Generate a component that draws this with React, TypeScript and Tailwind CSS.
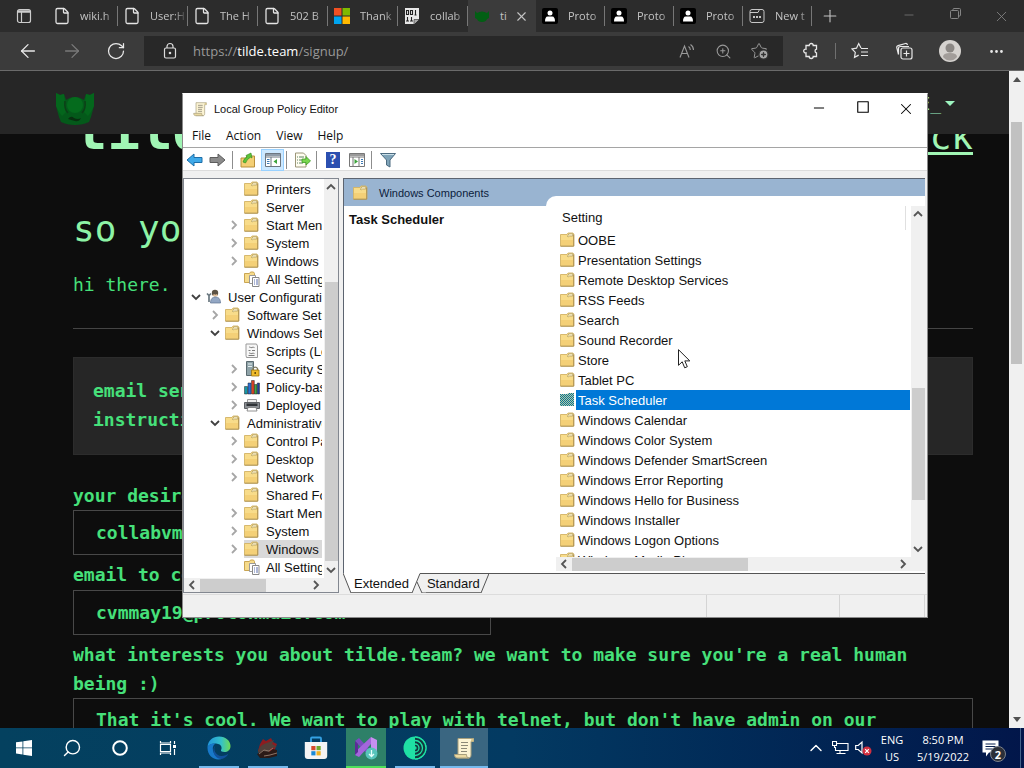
import type { ReactNode } from 'react';
import { ArrowLeft, ArrowRight, ChevronUp, CirclePlus, Ellipsis, File, Minus, Plus, RotateCw, Search, Square, Star, X, ZoomIn } from 'lucide-react';
import clsx from 'clsx';

/* ---------- icons ---------- */

const FolderIcon = () => (
    <svg width="16" height="16" viewBox="0 0 16 16" className="shrink-0">
        <path d="M.5 2.500h6.500l1-1.500h5l.8 1.500V14H.5z" fill="#f8dc8a" stroke="#d3b365" strokeWidth=".9" />
        <path d="M1 8h12.500v5.500H1z" fill="#f4d077" />
        <path d="M7.500 4.500l1.300-2.700h4v2.200H9.500l-.8.7z" fill="#fff3cb" stroke="#a8965c" strokeWidth=".7" />
        <path d="M13.700 2.500v11.700H.5" fill="none" stroke="#ad9150" />
    </svg>
);

const SelectedFolderIcon = () => (
    <svg width="16" height="16" viewBox="0 0 16 16" className="shrink-0">
        <defs>
            <pattern id="dither" width="2" height="2" patternUnits="userSpaceOnUse">
                <path d="M0 0h1v1H0zM1 1h1v1H1z" fill="#0a6f9e" />
            </pattern>
        </defs>
        <path d="M0 2h7.500l1-1H14v13H0z" fill="#b4cfa0" />
        <path d="M0 2h7.500l1-1H14v13H0z" fill="url(#dither)" />
    </svg>
);

const AllSettingsIcon = () => (
    <svg width="16" height="16" viewBox="0 0 16 16" className="shrink-0">
        <path d="M.5 2.500h5l1-1.500h3l1 1.500v9H.5z" fill="#f6db8b" stroke="#c9a552" />
        <path d="M5.500 4.500h6v8h-6z" fill="#fff" stroke="#999" />
        <path d="M8.500 6.500h6.500v9H8.500z" fill="#fff" stroke="#888" />
        <path d="M10 9h1m1 0h2M10 11h1m1 0h2M10 13h1m1 0h2" stroke="#5b6fae" />
    </svg>
);

const UserConfigIcon = () => (
    <svg width="16" height="16" viewBox="0 0 16 16" className="shrink-0">
        <circle cx="9" cy="4" r="3.200" fill="#5c5244" />
        <path d="M7.500 5.500a2 2 0 0 0 3.500 0" stroke="#e6c39d" strokeWidth="2" />
        <path d="M4.500 14c0-4 2-6 5-6s5 2 5 6z" fill="#93a7c4" stroke="#5f738f" strokeWidth=".7" />
        <path d="M1 4.500l2 2 2-2M3 6v7" fill="none" stroke="#6a7880" strokeWidth="1.700" />
    </svg>
);

const ScriptsIcon = () => (
    <svg width="16" height="16" viewBox="0 0 16 16" className="shrink-0">
        <path d="M2 1h10.500l1 2v11.500H2.500l-.5-2z" fill="#f7f7f7" stroke="#999" />
        <path d="M5 4.500c1-1.500 1.500 1 3 0s2 .5 2.500 0M4.500 7.500h2m1.500 0h3M5 10.500c1-1.500 1.500 1 3 0s2 .5 2.500 0M4.500 12.500h6" fill="none" stroke="#7b7b7b" />
    </svg>
);

const SecurityIcon = () => (
    <svg width="16" height="16" viewBox="0 0 16 16" className="shrink-0">
        <path d="M2.500.5h7v14h-7z" fill="#8fa3a8" stroke="#5a6a70" />
        <path d="M4 3h4M4 5.500h4" stroke="#e6f0f2" />
        <path d="M9 9V7.500a2.500 2.500 0 0 1 4.500 0V9" fill="none" stroke="#7d7a62" strokeWidth="1.300" />
        <path d="M7.500 9h7.500v6H7.500z" fill="#f0bc2c" stroke="#9a7412" strokeWidth=".8" />
        <path d="M11.200 11v2" stroke="#5a4308" strokeWidth="1.400" />
    </svg>
);

const PolicyIcon = () => (
    <svg width="16" height="16" viewBox="0 0 16 16" className="shrink-0">
        <path d="M.5 7.500h3V15h-3z" fill="#1697a6" stroke="#222" strokeWidth=".5" />
        <path d="M4 4h3v11H4z" fill="#2c6fd4" stroke="#222" strokeWidth=".5" />
        <path d="M7.500 1.500h2.800V15H7.500z" fill="#d94124" stroke="#222" strokeWidth=".5" />
        <path d="M10.500 5.500H13V15h-2.500z" fill="#41a546" stroke="#222" strokeWidth=".5" />
        <path d="M13.300 4h2.200v11h-2.200z" fill="#1d3f9a" stroke="#222" strokeWidth=".5" />
    </svg>
);

const PrinterIcon = () => (
    <svg width="16" height="16" viewBox="0 0 16 16" className="shrink-0">
        <path d="M3.500 2.500h9v4h-9z" fill="#eee" stroke="#999" />
        <path d="M.5 5.500h15v6H.5z" fill="#8b8f94" stroke="#5d6064" />
        <path d="M2.500 6.500h11v2.500h-11z" fill="#2f3236" />
        <path d="M4 10.500h8l1 3.500H3z" fill="#fff" stroke="#777" strokeWidth=".8" />
    </svg>
);

const ScrollIcon = ({ size = 16 }: { size?: number }) => (
    <svg width={size} height={size} viewBox="0 0 24 24" className="shrink-0">
        <path d="M6 2.500h15.500v3H19V19c0 2-1 3-2.500 3H6z" fill="#fbf3d3" stroke="#a89f7c" />
        <path d="M19 5.500V3.500l2.500-1v3z" fill="#d9c78c" />
        <path d="M2.500 18.500h12c0 2 .7 3.500 2.500 3.500H5c-1.500 0-2.500-1.500-2.500-3.500z" fill="#ead9a2" stroke="#a89f7c" />
        <path d="M9 6.500h7M9 9.500h7M9 12.500h6M9 15.500h6" stroke="#8b8877" strokeWidth="1.200" />
    </svg>
);

const Chevron = ({ dir, color = '#555', size = 10 }: { dir: 'up' | 'down' | 'left' | 'right'; color?: string; size?: number }) => {
    const paths = { up: 'M1 7l4-4 4 4', down: 'M1 3l4 4 4-4', left: 'M7 1L3 5l4 4', right: 'M3 1l4 4-4 4' };
    return (
        <svg width={size} height={size} viewBox="0 0 10 10" className="shrink-0">
            <path d={paths[dir]} fill="none" stroke={color} strokeWidth="1.800" />
        </svg>
    );
};

/* ---------- browser ---------- */

const PageIcon = () => (
    <File size={18} strokeWidth={1.7} className="shrink-0 text-neutral-200" />
);

const PersonIcon = () => (
    <svg width="16" height="16" viewBox="0 0 16 16">
        <rect width="16" height="16" rx="2" fill="#000" />
        <circle cx="8" cy="5" r="2.500" fill="#fff" />
        <path d="M3 13.500c0-3 .8-5 2.800-5h4.400c2 0 2.800 2 2.800 5z" fill="#fff" />
    </svg>
);

const WindowsLogo = () => (
    <svg width="16" height="16" viewBox="0 0 16 16">
        <path d="M0 0h7.500v7.500H0z" fill="#f25022" />
        <path d="M8.500 0H16v7.500H8.500z" fill="#7fba00" />
        <path d="M0 8.500h7.500V16H0z" fill="#00a4ef" />
        <path d="M8.500 8.500H16V16H8.500z" fill="#ffb900" />
    </svg>
);

const BinaryIcon = () => (
    <svg width="16" height="16" viewBox="0 0 16 16">
        <path d="M1 0h14v11l-5 5H1z" fill="#e8e8e8" />
        <path d="M2.500 2.500h2v4h-2zM6.500 2.500h2v4h-2zM11.500 2v5M10.500 7h2M3.500 9v4M2 13h3M7.500 9v4M6 13h3" fill="none" stroke="#222" strokeWidth="1.100" />
        <path d="M10 16v-4.500h5" fill="#aaa" stroke="#444" strokeWidth=".7" />
    </svg>
);

const NewTabIcon = () => (
    <svg width="16" height="16" viewBox="0 0 16 16" fill="none" stroke="#c8c8c8">
        <rect x="1" y="1.500" width="14" height="13" rx="2" />
        <path d="M1 4.500h8l1.500-3" />
        <path d="M4 9h2M7 9h2M10 9h2" strokeWidth="1.800" />
    </svg>
);

const GreenBlob = () => (
    <svg width="16" height="16" viewBox="0 0 16 16" className="shrink-0">
        <path d="M1 3l2 2q5-3 10 0l2-2v7l-2 1q-1 3-5 3t-5-3l-2-1z" fill="#025f14" />
    </svg>
);

const Tab = ({ icon, label, first }: { icon: ReactNode; label: string; first?: boolean }) => (
    <button className={clsx('flex h-8 items-center pl-1.5 text-left', first ? 'w-[70px]' : 'w-[69px]')}>
        <span className="flex w-4 shrink-0 justify-center">{icon}</span>
        <span className="ml-2.5 flex-1 overflow-hidden whitespace-nowrap [mask-image:linear-gradient(to_right,#000_65%,transparent)]">{label}</span>
        <span className="h-5 w-px bg-[#777]" />
    </button>
);

const leftTabs = [
    { label: 'wiki.h', icon: <PageIcon /> },
    { label: 'User:H', icon: <PageIcon /> },
    { label: 'The H', icon: <PageIcon /> },
    { label: '502 B', icon: <PageIcon /> },
    { label: 'Thank', icon: <WindowsLogo /> },
    { label: 'collab', icon: <BinaryIcon /> },
];

const TabStrip = () => (
    <div className="flex h-8 shrink-0 items-center bg-[#2c2c2c] font-['Open_Sans',sans-serif] text-[11px] text-[#c4c4c4]">
        <button aria-label="Tab actions" className="flex w-12 shrink-0 justify-center">
            <svg width="16" height="16" viewBox="0 0 16 16" fill="none" stroke="#ccc" strokeWidth="1.200">
                <rect x="1.500" y="1.500" width="13" height="13" rx="2" />
                <path d="M5.500 4v10.500" />
                <path d="M2 3.500h12" strokeWidth="2.500" />
            </svg>
        </button>
        {leftTabs.map(tab => <Tab key={tab.label} icon={tab.icon} label={tab.label} first />)}
        <div className="flex h-8 w-[68px] shrink-0 items-center bg-[#3b3b3b] pl-1.5">
            <GreenBlob />
            <span className="ml-2.5 w-3.5">ti</span>
            <button aria-label="Close tab"><X size={15} strokeWidth={1.8} /></button>
        </div>
        <Tab icon={<PersonIcon />} label="Proto" />
        <Tab icon={<PersonIcon />} label="Proto" />
        <Tab icon={<PersonIcon />} label="Proto" />
        <Tab icon={<NewTabIcon />} label="New t" />
        <button aria-label="New tab" className="ml-2"><Plus size={20} strokeWidth={1.3} /></button>
        <div className="ml-auto flex text-[#858585]">
            <button aria-label="Minimize" className="flex w-[46px] justify-center"><Minus size={14} strokeWidth={1.2} /></button>
            <button aria-label="Restore" className="flex w-[46px] justify-center">
                <svg width="11" height="11" viewBox="0 0 11 11" fill="none" stroke="currentColor">
                    <rect x=".5" y="2.500" width="8" height="8" rx="1" />
                    <path d="M3 2.500V1.500q0-1 1-1h5.500q1 0 1 1V7q0 1-1 1h-1" />
                </svg>
            </button>
            <button aria-label="Close" className="flex w-[46px] justify-center"><X size={17} strokeWidth={1.2} /></button>
        </div>
    </div>
);

const Toolbar = () => (
    <div className="flex h-[39px] shrink-0 items-center border-b border-[#6a6a6a] bg-[#3b3b3b] px-1.5 text-[#e8e8e8]">
        <button aria-label="Back" className="flex w-11 justify-center"><ArrowLeft size={22} strokeWidth={1.4} /></button>
        <button aria-label="Forward" className="flex w-11 justify-center text-[#7a7a7a]"><ArrowRight size={22} strokeWidth={1.4} /></button>
        <button aria-label="Reload" className="flex w-11 justify-center"><RotateCw size={20} strokeWidth={1.5} /></button>
        <div className="ml-1.5 flex h-[30px] flex-1 items-center bg-[#282828] pr-1.5 text-[#999]">
            <svg width="16" height="18" viewBox="0 0 16 18" fill="none" stroke="#ddd" strokeWidth="1.200" className="ml-[18px]">
                <rect x="2.500" y="6" width="11" height="10" rx="1.500" />
                <path d="M5 6V4.500a3 3 0 0 1 6 0V6" />
                <circle cx="8" cy="11" r=".7" fill="#ddd" />
            </svg>
            <div role="textbox" aria-label="Address" className="ml-[15px] flex-1 pt-0.5 font-['Open_Sans',sans-serif] text-[13px]">
                https://<span className="text-white">tilde.team</span>/signup/
            </div>
            <button aria-label="Read aloud" className="flex w-9 justify-center">
                <svg width="16" height="16" viewBox="0 0 16 16" fill="none" stroke="currentColor" strokeWidth="1.100">
                    <path d="M1 14.500L5.500 3 10 14.500M2.800 10.500h5.400M9.500 3.500q1.800 1 1.800 3.500M11.500 1.500Q14.500 3.500 14.500 7" />
                </svg>
            </button>
            <button aria-label="Zoom" className="flex w-9 justify-center"><ZoomIn size={17} strokeWidth={1.5} /></button>
            <button aria-label="Add to favorites" className="relative flex w-9 justify-center">
                <Star size={18} strokeWidth={1.3} />
                <CirclePlus size={11} strokeWidth={3} className="absolute right-2 bottom-0 fill-[#a8a8a8] text-[#333]" />
            </button>
        </div>
        <button aria-label="Extensions" className="ml-1.5 flex w-11 justify-center">
            <svg width="18" height="18" viewBox="0 0 18 18" fill="none" stroke="currentColor" strokeWidth="1.300">
                <path d="M4 3.500h3.200a2 2 0 0 1 4 0h3.300v3.700a1.900 1.900 0 0 0 0 3.700v3.600h-3.300a2 2 0 0 1-4 0H4v-3.600a1.900 1.900 0 1 1 0-3.700z" />
            </svg>
        </button>
        <span className="mx-0.5 h-4 w-px bg-[#707070]" />
        <button aria-label="Favorites" className="flex w-11 justify-center">
            <svg width="18" height="18" viewBox="0 0 18 18" fill="none" stroke="currentColor" strokeWidth="1.200">
                <path d="M10 6L7.700 1.500 5.500 6.200l-4.500.7 3.300 3.500-.8 5 4.200-2.300M10 6.500h7M10 10h7M10 13.500h7" />
            </svg>
        </button>
        <button aria-label="Collections" className="flex w-11 justify-center">
            <svg width="18" height="18" viewBox="0 0 18 18" fill="none" stroke="currentColor" strokeWidth="1.200">
                <path d="M3.500 12.500L1.700 5.500Q1.500 4 3 3.600L10.500 1.500Q12 1.200 12.500 3M3.500 12.500V6.500q0-2 2-2H14" />
                <rect x="6" y="6" width="11" height="11" rx="2" />
                <path d="M11.500 8.500v6M8.500 11.500h6" />
            </svg>
        </button>
        <button aria-label="Profile" className="flex w-12 justify-center">
            <svg width="22" height="22" viewBox="0 0 22 22">
                <circle cx="11" cy="11" r="11" fill="#d5d2cf" />
                <circle cx="11" cy="8" r="4.500" fill="#8b8784" />
                <path d="M4 17q0-4 7-4t7 4q-3 3.500-7 3.500T4 17z" fill="#a29d9a" />
            </svg>
        </button>
        <button aria-label="Settings and more" className="flex w-11 justify-center"><Ellipsis size={17} strokeWidth={2} /></button>
    </div>
);

const SignupPage = () => (
    <div className="flex min-w-0 flex-1 flex-col bg-[#0d0d0d] font-['DejaVu_Sans_Mono',monospace] text-lg text-[#46e07a]">
        <header className="flex h-[63px] shrink-0 items-center justify-between bg-[#262626] pr-[54px] pl-[55px]">
            <svg width="40" height="36" viewBox="0 0 40 36" className="mt-3">
                <path d="M1 2l4 2 4-1 2 6q4-3 9-3t9 3l2-6 4 1 4-2v13l-3 11-2 5q-6 3-14 3T6 31l-2-5L1 15z" fill="#04591a" />
                <path d="M1 2l4 2 4-1 1 9 1 9-4 4-3-4L1 15zM39 2l-4 2-4-1-1 9-1 9 4 4 3-4 3-6z" fill="#04661c" />
                <circle cx="20" cy="14" r="8" fill="#056b1d" />
                <path d="M10 10q-1 8 3 12M30 10q1 8-3 12" fill="none" stroke="#0d3f18" strokeWidth="1.500" />
                <path d="M13 28q3-4 6-1 4 2 7 0-2 4-6 3t-7-2z" fill="#083010" />
            </svg>
            <button className="flex items-center gap-1 pt-0.5 text-[#9df5c0]">
                E_
                <svg width="10" height="5" viewBox="0 0 10 5"><path d="M0 0h10L5 5z" fill="currentColor" /></svg>
            </button>
        </header>
        <div className="min-h-0 flex-1 overflow-hidden pr-9 pl-[73px]">
            <div className="-mt-[30px] flex items-baseline justify-between text-[#a0f5b4]">
                <h1 className="pl-0.5 text-[54px] leading-none font-bold">tilde</h1>
                <a href="#back" className="text-4xl leading-none underline decoration-3 underline-offset-3">back</a>
            </div>
            <h2 className="mt-[53px] text-4xl leading-none text-[#8df3a6]">so you</h2>
            <p className="mt-[23px] leading-[29px]">hi there.</p>
            <hr className="mt-[29px] border-[#444]" />
            <pre className="mt-7 h-[98px] border border-[#2c2c2c] bg-[#262626] px-[19px] py-[18px] font-['DejaVu_Sans_Mono',monospace] leading-[29px] font-bold">
                {'email sent\ninstructions'}
            </pre>
            <form className="mt-[26px] font-bold">
                <label htmlFor="username" className="block leading-[29px]">your desired</label>
                <input id="username" defaultValue="collabvm" className="block h-[45px] w-[418px] border border-[#484848] px-[22px] py-0 outline-none" />
                <label htmlFor="email" className="mt-[5px] block leading-[29px]">email to contact</label>
                <input id="email" defaultValue="cvmmay19@protonmail.com" className="mt-px block h-[45px] w-[418px] border border-[#484848] px-[22px] py-0 outline-none" />
                <label htmlFor="interests" className="mt-[5px] block leading-[29px]">
                    what interests you about tilde.team? we want to make sure you&apos;re a real human<br />being :)
                </label>
                <textarea
                    id="interests"
                    rows={4}
                    defaultValue="That it's cool. We want to play with telnet, but don't have admin on our"
                    className="block w-full resize-none overflow-hidden border border-[#484848] px-[22px] py-1.5 leading-[29px] outline-none"
                />
            </form>
        </div>
    </div>
);

const PageScrollbar = () => (
    <div className="flex w-[15px] shrink-0 flex-col items-center justify-between bg-[#f0f0f0] py-1.5">
        <svg width="8" height="5" viewBox="0 0 8 5"><path d="M0 5h8L4 0z" fill="#505050" /></svg>
        <div className="mt-10 mb-auto h-[242px] w-[11px] bg-[#c1c1c1]" />
        <svg width="8" height="5" viewBox="0 0 8 5"><path d="M0 0h8L4 5z" fill="#505050" /></svg>
    </div>
);

/* ---------- policy editor ---------- */

type TreeRow = { label: string; level: number; arrow?: 'right' | 'down'; icon?: ReactNode; selected?: boolean };

const tree: TreeRow[] = [
    { label: 'Printers', level: 2 },
    { label: 'Server', level: 2 },
    { label: 'Start Menu', level: 2, arrow: 'right' },
    { label: 'System', level: 2, arrow: 'right' },
    { label: 'Windows', level: 2, arrow: 'right' },
    { label: 'All Settings', level: 2, icon: <AllSettingsIcon /> },
    { label: 'User Configuration', level: 0, arrow: 'down', icon: <UserConfigIcon /> },
    { label: 'Software Settings', level: 1, arrow: 'right' },
    { label: 'Windows Settings', level: 1, arrow: 'down' },
    { label: 'Scripts (Logon)', level: 2, icon: <ScriptsIcon /> },
    { label: 'Security Settings', level: 2, arrow: 'right', icon: <SecurityIcon /> },
    { label: 'Policy-based', level: 2, arrow: 'right', icon: <PolicyIcon /> },
    { label: 'Deployed', level: 2, arrow: 'right', icon: <PrinterIcon /> },
    { label: 'Administrative', level: 1, arrow: 'down' },
    { label: 'Control Panel', level: 2, arrow: 'right' },
    { label: 'Desktop', level: 2, arrow: 'right' },
    { label: 'Network', level: 2, arrow: 'right' },
    { label: 'Shared Folders', level: 2 },
    { label: 'Start Menu', level: 2, arrow: 'right' },
    { label: 'System', level: 2, arrow: 'right' },
    { label: 'Windows', level: 2, arrow: 'right', selected: true },
    { label: 'All Settings', level: 2, icon: <AllSettingsIcon /> },
];

const levelPadding = ['pl-0.5', 'pl-[21px]', 'pl-10'];

const settings = [
    'OOBE', 'Presentation Settings', 'Remote Desktop Services', 'RSS Feeds', 'Search', 'Sound Recorder', 'Store', 'Tablet PC',
    'Task Scheduler', 'Windows Calendar', 'Windows Color System', 'Windows Defender SmartScreen', 'Windows Error Reporting',
    'Windows Hello for Business', 'Windows Installer', 'Windows Logon Options', 'Windows Media Player',
];

const VScroll = ({ thumb }: { thumb: string }) => (
    <div className="flex w-3.5 shrink-0 flex-col items-center bg-[#f0f0f0]">
        <button aria-label="Scroll up" className="flex h-4 shrink-0 items-center"><Chevron dir="up" /></button>
        <div className={clsx('w-[13px] bg-[#cdcdcd]', thumb)} />
        <button aria-label="Scroll down" className="mt-auto flex h-4 shrink-0 items-center"><Chevron dir="down" /></button>
    </div>
);

const HScroll = ({ thumb }: { thumb: string }) => (
    <div className="flex h-3.5 min-w-0 flex-1 items-center bg-[#f0f0f0]">
        <button aria-label="Scroll left" className="flex w-4 shrink-0 justify-center"><Chevron dir="left" /></button>
        <div className={clsx('h-[13px] bg-[#cdcdcd]', thumb)} />
        <button aria-label="Scroll right" className="ml-auto flex w-4 shrink-0 justify-center"><Chevron dir="right" /></button>
    </div>
);

const TreePane = () => (
    <div className="flex w-[156px] shrink-0 flex-col border border-[#828790] bg-white">
        <div className="flex min-h-0 flex-1">
            <ul className="mr-0.5 min-w-0 flex-1 overflow-hidden pt-px">
                {tree.map((row, i) => (
                    <li key={i} className={clsx('flex h-[18px] items-center whitespace-nowrap', levelPadding[row.level])}>
                        <span className="flex w-5 shrink-0 justify-center">
                            {row.arrow && <Chevron dir={row.arrow} color={row.arrow === 'down' ? '#404040' : '#a6a6a6'} />}
                        </span>
                        <span className={clsx('flex h-[18px] flex-1 items-center gap-1.5 overflow-hidden', row.selected && 'bg-[#d9d9d9]')}>
                            {row.icon ?? <FolderIcon />}
                            <span className="pt-px">{row.label}</span>
                        </span>
                    </li>
                ))}
            </ul>
            <VScroll thumb="mt-[87px] h-[279px]" />
        </div>
        <div className="flex shrink-0">
            <HScroll thumb="w-[66px]" />
            <span className="w-3.5 bg-[#f0f0f0]" />
        </div>
    </div>
);

const SettingsPane = () => (
    <div className="flex min-h-0 flex-1 border-t border-l border-[#5c6470] bg-[#99b4d1]">
        <div className="flex w-[202px] shrink-0 flex-col">
            <div className="flex h-[27px] shrink-0 items-center gap-2.5 pl-[9px] text-[11px] text-[#0c1c3c]">
                <FolderIcon />
                Windows Components
            </div>
            <div className="flex-1 bg-white px-[5px] pt-1.5 font-bold">Task Scheduler</div>
        </div>
        <div className="mt-[17px] flex min-w-0 flex-1 flex-col rounded-tl-[10px] bg-white pt-2.5 pb-0.5 pl-2.5">
            <div className="flex min-h-0 flex-1">
                <div className="min-w-0 flex-1 overflow-hidden pr-px">
                    <div className="mr-1 flex h-6 items-center border-r border-[#e0e0e0] pl-1.5">Setting</div>
                    <ul className="pl-1">
                        {settings.map(name => {
                            const selected = name === 'Task Scheduler';
                            return (
                                <li key={name} className="flex h-5 items-center whitespace-nowrap">
                                    {selected ? <SelectedFolderIcon /> : <FolderIcon />}
                                    <span className={clsx('flex-1 pt-0.5 pb-px pl-0.5 leading-[17px]', selected && 'bg-[#0078d7] text-white')}>{name}</span>
                                </li>
                            );
                        })}
                    </ul>
                </div>
                <VScroll thumb="mt-[166px] h-28" />
            </div>
            <div className="flex shrink-0">
                <HScroll thumb="w-44" />
                <span className="w-3.5 bg-[#f0f0f0]" />
            </div>
        </div>
    </div>
);

const MmcToolbar = () => (
    <div className="flex h-[23px] shrink-0 items-center border-b border-[#dcdcdc] pt-px pl-[3px]">
        <button aria-label="Back">
            <svg width="17" height="14" viewBox="0 0 17 14"><path d="M1 7l7-6v3.500h8v5H8V13z" fill="#3fa9e8" stroke="#1d6ea8" /></svg>
        </button>
        <button aria-label="Forward" className="ml-1.5">
            <svg width="17" height="14" viewBox="0 0 17 14"><path d="M16 7L9 1v3.500H1v5h8V13z" fill="#8b8b8b" stroke="#5c5c5c" /></svg>
        </button>
        <span className="mr-1 ml-1.5 h-[18px] w-px bg-[#8d8d8d]" />
        <button aria-label="Up one level" className="flex w-[22px] justify-center">
            <svg width="16" height="16" viewBox="0 0 16 16">
                <path d="M1 6h5l1-2h7.500v11H1z" fill="#f4cf75" stroke="#b98f3b" />
                <path d="M3 10q1-4 4-5L6 3.500 11 1l1 5-1.500-.8Q7 7 5.500 11z" fill="#5cc43a" stroke="#31841b" strokeWidth=".6" />
            </svg>
        </button>
        <button aria-label="Show console tree" className="ml-0.5 flex h-[22px] w-[23px] items-center justify-center border border-[#99d1ff] bg-[#cce8ff]">
            <svg width="16" height="14" viewBox="0 0 16 14">
                <path d="M.5.5h15v13H.5z" fill="#fff" stroke="#6d7680" />
                <path d="M1 2h14" stroke="#8f9ba8" strokeWidth="2" />
                <path d="M.5 4h15M6 4v9.500" stroke="#6d7680" />
                <path d="M2 6.500h2.500M2 8.500h2.500M2 10.500h2.500" stroke="#3d7ab5" />
                <path d="M12 6v5L8.500 8.500z" fill="#3da33b" />
            </svg>
        </button>
        <span className="mr-[7px] ml-0.5 h-[18px] w-px bg-[#8d8d8d]" />
        <button aria-label="Export list">
            <svg width="17" height="16" viewBox="0 0 17 16">
                <path d="M1.500 1h8L12 3.500V15H1.500z" fill="#fffdf0" stroke="#9b9678" />
                <path d="M3 5h1m1 0h5M3 8h1m1 0h4M3 11h1m1 0h4" stroke="#5c8264" />
                <path d="M8 7h4V4.500L16.500 9 12 13v-2.500H8z" fill="#79d64f" stroke="#3f9d27" strokeWidth=".8" />
            </svg>
        </button>
        <span className="mr-[9px] ml-[5px] h-[18px] w-px bg-[#8d8d8d]" />
        <button aria-label="Help" className="flex h-4 w-3.5 items-center justify-center bg-[#2b4fb0] font-['Liberation_Serif',serif] text-sm font-bold text-white">?</button>
        <button aria-label="Show action pane" className="ml-[9px]">
            <svg width="16" height="14" viewBox="0 0 16 14" className="block">
                <path d="M.5.5h15v13H.5z" fill="#fff" stroke="#777" />
                <path d="M1 2h14" stroke="#9a9a9a" strokeWidth="2" />
                <path d="M.5 4h15M10 4v9.500M4 4v9.500" stroke="#777" />
                <path d="M12 6.500h2M12 8.500h2M12 10.500h2" stroke="#3d7ab5" />
                <path d="M5.500 6v5L9 8.500z" fill="#3da33b" />
            </svg>
        </button>
        <span className="mx-1.5 h-[18px] w-px bg-[#8d8d8d]" />
        <button aria-label="Filter" className="ml-0.5">
            <svg width="16" height="16" viewBox="0 0 16 16" className="block">
                <path d="M.5 1.500h15L10 8v7l-3.500-2V8z" fill="#7fa3b8" stroke="#4c6b80" />
                <path d="M2 2.500h12" stroke="#c9dfe8" />
            </svg>
        </button>
    </div>
);

const ViewTabs = () => (
    <div className="flex h-5 shrink-0 items-stretch">
        <svg width="8" height="20" viewBox="0 0 8 20"><path d="M0 0h8v20z" fill="#fff" /><path d="M0 0l8 20" stroke="#555" fill="none" /></svg>
        <button className="border-b border-[#777] bg-white px-[3px] pt-0.5">Extended</button>
        <svg width="14" height="20" viewBox="0 0 14 20">
            <path d="M0 0h8L0 20z" fill="#fff" />
            <path d="M0 20L8 .5h6M5 9l5 11h4" stroke="#555" fill="none" />
        </svg>
        <button className="border-t border-b border-t-[#555] border-b-[#777] px-px pt-px">Standard</button>
        <svg width="8" height="20" viewBox="0 0 8 20"><path d="M0 20L8 .5H0" stroke="#555" fill="none" /></svg>
        <span className="flex-1 border-t border-[#555]" />
    </div>
);

const PolicyEditor = () => (
    <section className="absolute top-[93px] left-[182px] flex h-[525px] w-[746px] flex-col border border-[#8a8a8a] border-t-white bg-[#f0f0f0] font-['Liberation_Sans',Arial,sans-serif] text-[13px] leading-4 text-[#111]">
        <div className="flex h-[30px] shrink-0 items-center bg-white pl-[9px] text-[11px]">
            <ScrollIcon />
            <span className="ml-1.5">Local Group Policy Editor</span>
            <div className="ml-auto flex text-black">
                <button aria-label="Minimize window" className="flex w-11 justify-center"><Minus size={16} strokeWidth={1.5} /></button>
                <button aria-label="Maximize window" className="flex w-11 justify-center">
                    <Square size={14} strokeWidth={1.9} className="[&_rect]:[rx:0]" />
                </button>
                <button aria-label="Close window" className="flex w-[42px] justify-center"><X size={18} strokeWidth={1.4} /></button>
            </div>
        </div>
        <nav className="flex h-6 shrink-0 items-center gap-[15px] border-b border-[#a5a5a5] bg-white pl-[9px] font-['Open_Sans',sans-serif] text-xs">
            <button>File</button>
            <button>Action</button>
            <button>View</button>
            <button>Help</button>
        </nav>
        <div className="bg-white"><MmcToolbar /></div>
        <div className="flex min-h-0 flex-1 gap-1 pt-[7px]">
            <TreePane />
            <div className="flex min-w-0 flex-1 flex-col pr-0.5">
                <SettingsPane />
                <ViewTabs />
            </div>
        </div>
        <footer className="mt-px flex h-[23px] shrink-0 border-t border-[#dcdcdc] pr-0.5">
            <span className="flex-1" />
            <span className="w-[133px] border-l border-[#d4d4d4]" />
            <span className="w-[86px] border-x border-[#d4d4d4]" />
        </footer>
    </section>
);

/* ---------- taskbar ---------- */

const TaskButton = ({ label, children, className }: { label: string; children: ReactNode; className?: string }) => (
    <button aria-label={label} className={clsx('flex h-10 items-center justify-center border-b-2 pt-0.5', className)}>{children}</button>
);

const Taskbar = () => (
    <div className="flex h-10 shrink-0 items-center bg-linear-to-r from-[#04415f] via-[#033a62] to-[#02164a] font-['Open_Sans',sans-serif] text-[11px] text-white">
        <TaskButton label="Start" className="w-12 border-transparent">
            <svg width="16" height="16" viewBox="0 0 16 16" fill="#fff"><path d="M0 2.300L6.500 1.400v6.100H0zM7.300 1.300L16 0v7.500H7.300zM0 8.300h6.500v6.200L0 13.600zM7.300 8.300H16V16l-8.700-1.300z" /></svg>
        </TaskButton>
        <TaskButton label="Search" className="w-12 border-transparent"><Search size={20} strokeWidth={1.7} className="-scale-x-100" /></TaskButton>
        <TaskButton label="Cortana" className="w-12 border-transparent">
            <svg width="16" height="16" viewBox="0 0 16 16"><circle cx="8" cy="8" r="6.800" fill="none" stroke="#fff" strokeWidth="2" /></svg>
        </TaskButton>
        <TaskButton label="Task view" className="w-12 border-transparent">
            <svg width="18" height="16" viewBox="0 0 18 16" fill="none" stroke="#fff" strokeWidth="1.200">
                <path d="M1.500 4.500h10v7h-10zM1.500 1v2h10V1M1.500 15v-2h10v2M15.500 1v3M15.500 9v6" />
                <path d="M14 5h3v3h-3z" fill="#fff" stroke="none" />
            </svg>
        </TaskButton>
        <TaskButton label="Microsoft Edge" className="ml-[7px] w-10 border-[#76b9ed]">
            <svg width="24" height="24" viewBox="0 0 24 24">
                <defs>
                    <linearGradient id="edgeTop" x1="0" x2="1"><stop offset="0" stopColor="#2195dc" /><stop offset=".6" stopColor="#35c1c8" /><stop offset="1" stopColor="#6edb55" /></linearGradient>
                </defs>
                <path d="M.5 11C1 4.500 6 .5 12 .5c7 0 11.500 4.500 11.500 9.500 0 4-3 6-6 6-2.500 0-4-1-3.500-2 1-1 1.500-6-5-6.500C5 7.200 1.500 9 .5 11z" fill="url(#edgeTop)" />
                <path d="M.5 11C2 8 5 7 8.500 7.500 6 9 5 12 6.500 16c1.500 4 5.500 6.500 9.500 6.500C8 26 0 20 .5 11z" fill="#1879c9" />
                <path d="M8.500 9c-3 4 0 11 6 11 3 0 5.500-1 7-2.500-1 2.500-3.500 4.500-6 5.300C8 24 3.500 14.500 8.500 9z" fill="#12519b" />
            </svg>
        </TaskButton>
        <TaskButton label="Game" className="ml-[9px] w-10 border-[#76b9ed]">
            <svg width="24" height="24" viewBox="0 0 24 24">
                <path d="M4 8l3-5 3 2 5-3 2 4 4 2-2 5 1 5-5-1-6 3-3-4-4-1z" fill="#8c1c20" />
                <path d="M2 16c1-5 4-8 9-9l7-3-2 4 5 3-6 1-2 4-5 1-3 3z" fill="#51403a" />
                <path d="M1 18l6-3 6 1 4-3 4 1v6l-8 2H4z" fill="#2b1a17" />
                <path d="M3 18l5-4 5 1 4-3M8 20l6-1 7-2" fill="none" stroke="#8b7568" />
            </svg>
        </TaskButton>
        <TaskButton label="Microsoft Store" className="ml-2 w-10 border-transparent">
            <svg width="24" height="24" viewBox="0 0 24 24">
                <path d="M7 6V2.500Q7 1.500 8 1.500h8q1 0 1 1V6" fill="none" stroke="#35a2e4" strokeWidth="1.800" />
                <path d="M.8 6h22.400v14q0 3-3 3H3.800q-3 0-3-3z" fill="#f4f4f4" />
                <path d="M7.300 10H11.500v4.200H7.300z" fill="#d6492a" />
                <path d="M12.500 10h4.200v4.200h-4.200z" fill="#6fa82b" />
                <path d="M7.300 15.200h4.200v4.200H7.300z" fill="#1a8ad6" />
                <path d="M12.500 15.200h4.200v4.200h-4.200z" fill="#eeb020" />
            </svg>
        </TaskButton>
        <TaskButton label="Visual Studio Installer" className="ml-2.5 w-10 border-[#4fe05a] bg-[#2e8068]">
            <svg width="24" height="24" viewBox="0 0 24 24">
                <path d="M1 5l4-3 12 13v7z" fill="#7c4cc0" />
                <path d="M17 1l6 3v15l-6 4z" fill="#c790f0" />
                <path d="M17 1v7L5 21l-4-2v-3z" fill="#a466dc" />
                <path d="M1 5v14l3-3V8z" fill="#5c2c97" />
                <circle cx="17.500" cy="17.500" r="6" fill="#58c4bb" />
                <path d="M17.500 14v6M15 18l2.500 2.500L20 18" fill="none" stroke="#e6fffb" strokeWidth="1.300" />
            </svg>
        </TaskButton>
        <TaskButton label="Tor Browser" className="ml-[9px] w-10 border-[#76b9ed]">
            <svg width="24" height="24" viewBox="0 0 24 24">
                <circle cx="12" cy="12" r="11.500" fill="#1fe0a4" />
                <path d="M12 1a11 11 0 0 1 0 22z" fill="#12383f" />
                <path d="M12 4.500a7.500 7.500 0 0 1 0 15M12 8a4 4 0 0 1 0 8M12 11a1 1 0 0 1 0 2M12 1a11 11 0 0 1 0 22" fill="none" stroke="#1fe0a4" strokeWidth="1.300" />
            </svg>
        </TaskButton>
        <TaskButton label="Local Group Policy Editor" className="ml-[5px] w-12 border-[#76b9ed] bg-[#3a6681]"><ScrollIcon size={24} /></TaskButton>

        <div className="ml-auto flex items-center">
            <button aria-label="Show hidden icons" className="flex w-5 justify-center"><ChevronUp size={20} strokeWidth={1.7} /></button>
            <svg width="17" height="14" viewBox="0 0 17 14" fill="none" stroke="#fff" strokeWidth="1.100" className="ml-1.5">
                <path d="M5 2.500h11v7H3.500V6M8 9.500v3M4.500 12.500h9M.5.5h4v4h-4zM2.500 4.500V7" />
            </svg>
            <svg width="17" height="16" viewBox="0 0 17 16" className="ml-1.5">
                <path d="M.7 5.500h2.500L7 2v11L3.200 9.500H.7z" fill="none" stroke="#fff" strokeWidth="1.200" />
                <circle cx="12" cy="11" r="4.500" fill="#d22f40" />
                <path d="M10.200 9.200l3.600 3.600m0-3.600l-3.600 3.600" stroke="#fff" strokeWidth="1.200" />
            </svg>
            <button className="w-10 text-center leading-[17px]">ENG<br />US</button>
            <button className="w-[62px] text-center leading-[17px]">8:50 PM<br />5/19/2022</button>
            <button aria-label="Notifications" className="relative mr-1 ml-2 flex h-10 w-[30px] items-center">
                <svg width="17" height="17" viewBox="0 0 17 17">
                    <path d="M.5.5h16v12H7l-3 4v-4H.5z" fill="#fff" />
                    <path d="M3.500 4h10M3.500 6.500h10M3.500 9h7" stroke="#08204f" strokeWidth="1.200" />
                </svg>
                <span className="absolute right-1.5 bottom-1.5 flex h-4 w-4 items-center justify-center rounded-full border border-[#7c828c] bg-[#2b2f38] text-[11px] leading-none font-bold">2</span>
            </button>
            <span className="mr-[3px] ml-1 h-10 w-px bg-[#44628a]" />
        </div>
    </div>
);

const App = () => {
    return (
        <div className="relative flex h-screen flex-col overflow-hidden bg-[#0d0d0d]">
            <TabStrip />
            <Toolbar />
            <main className="flex min-h-0 flex-1">
                <SignupPage />
                <PageScrollbar />
            </main>
            <Taskbar />

            <PolicyEditor />

            {/* Mouse pointer */}
            <svg width="13" height="20" viewBox="0 0 13 20" className="pointer-events-none absolute top-[349px] left-[678px]">
                <path d="M.5.7v15.600l3.700-3.500 2.500 6 2.600-1.100-2.500-5.800h5z" fill="#fff" stroke="#222" />
            </svg>
        </div>
    );
};

export default App;
